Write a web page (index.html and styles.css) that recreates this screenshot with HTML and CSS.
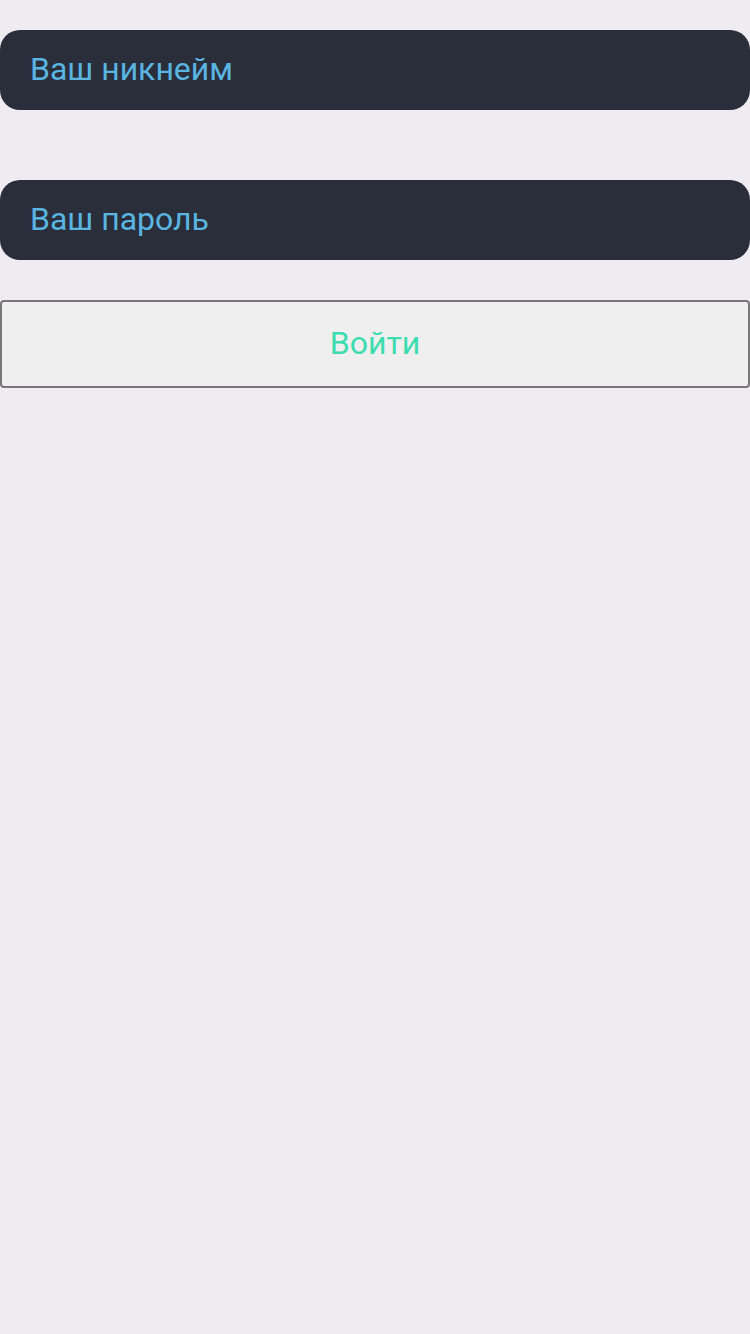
FILE: index.html
```html
<!DOCTYPE html>
<html lang="ru">
<head>
<meta charset="utf-8">
<link rel="stylesheet" href="styles.css">
</head>
<body>
<form class="login">
  <div class="field">Ваш никнейм</div>
  <div class="field field-password">Ваш пароль</div>
  <button type="button" class="submit">Войти</button>
</form>
</body>
</html>
```

FILE: styles.css
```css
html, body {
  margin: 0;
  padding: 0;
  background: #eeebf1;
  height: 100%;
}
body {
  font-family: Roboto, "Noto Sans", sans-serif;
}
.login {
  display: flex;
  flex-direction: column;
  padding-top: 30px;
}
.field {
  height: 80px;
  box-sizing: border-box;
  background: #292e3a;
  border-radius: 20px;
  color: #5ab5e1;
  font-size: 32px;
  display: flex;
  align-items: center;
  padding-left: 30px;
  padding-bottom: 2px;
}
.field-password {
  margin-top: 70px;
}
.submit {
  margin-top: 40px;
  height: 88px;
  box-sizing: border-box;
  border: 2px solid #777777;
  border-radius: 4px;
  background: #efefef;
  color: #3ddcb0;
  font-family: Roboto, "Noto Sans", sans-serif;
  font-size: 32px;
  padding: 0 0 3px 0;
  width: 100%;
}
```
